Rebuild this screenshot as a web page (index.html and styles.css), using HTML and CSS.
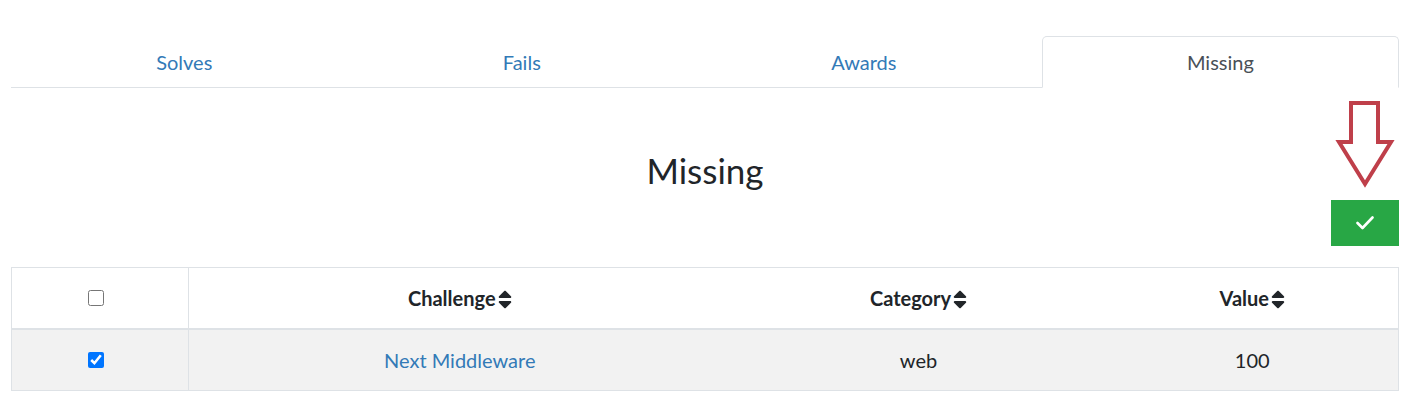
FILE: index.html
```html
<!DOCTYPE html>
<html>
<head>
<meta charset="utf-8">
<link rel="stylesheet" href="styles.css">
</head>
<body>
<div class="page">
  <nav class="tabs">
    <a class="tab" href="#">Solves</a>
    <a class="tab" href="#">Fails</a>
    <a class="tab" href="#">Awards</a>
    <a class="tab active" href="#">Missing</a>
  </nav>

  <h3 class="title">Missing</h3>

  <div class="actions">
    <svg class="arrow" width="60" height="88" viewBox="0 0 60 88">
      <polygon points="16,3 43,3 43,42 56,42 30,84 4,42 16,42" fill="#fff" stroke="#bf3f4a" stroke-width="4" stroke-linejoin="miter"/>
    </svg>
    <button class="btn-ok" type="button">
      <svg width="18" height="14" viewBox="0 0 18 14"><polyline points="1.5,7 6.5,12 16.5,1.5" fill="none" stroke="#fff" stroke-width="2.6" stroke-linecap="round" stroke-linejoin="round"/></svg>
    </button>
  </div>

  <table class="grid">
    <thead>
      <tr>
        <th class="sel"><input type="checkbox"></th>
        <th class="c2">Challenge<svg class="sort" viewBox="0 0 320 512"><path d="M41 288h238c21.4 0 32.1 25.9 17 41L177 448c-9.4 9.4-24.6 9.4-33.900 0L24 329c-15.1-15.1-4.400-41 17-41zm255-105L177 64c-9.400-9.400-24.600-9.400-33.900 0L24 183c-15.1 15.1-4.400 41 17 41h238c21.400 0 32.1-25.900 17-41z"/></svg></th>
        <th class="c3">Category<svg class="sort" viewBox="0 0 320 512"><path d="M41 288h238c21.4 0 32.1 25.9 17 41L177 448c-9.4 9.4-24.6 9.4-33.900 0L24 329c-15.1-15.1-4.400-41 17-41zm255-105L177 64c-9.400-9.400-24.600-9.400-33.900 0L24 183c-15.1 15.1-4.400 41 17 41h238c21.400 0 32.1-25.900 17-41z"/></svg></th>
        <th class="c4">Value<svg class="sort" viewBox="0 0 320 512"><path d="M41 288h238c21.4 0 32.1 25.9 17 41L177 448c-9.4 9.4-24.6 9.4-33.900 0L24 329c-15.1-15.1-4.400-41 17-41zm255-105L177 64c-9.400-9.400-24.600-9.400-33.900 0L24 183c-15.1 15.1-4.400 41 17 41h238c21.400 0 32.1-25.900 17-41z"/></svg></th>
      </tr>
    </thead>
    <tbody>
      <tr>
        <td class="sel"><input type="checkbox" checked></td>
        <td><a href="#">Next Middleware</a></td>
        <td>web</td>
        <td>100</td>
      </tr>
    </tbody>
  </table>
</div>
</body>
</html>
```

FILE: styles.css
```css
* { box-sizing: border-box; }

body {
  margin: 0;
  background: #fff;
  font-family: Lato, "Noto Sans", sans-serif;
  font-size: 20px;
  line-height: 30px;
  color: #212529;
}

.page {
  width: 1388px;
  margin-left: 11px;
  padding-top: 36px;
}

.tabs {
  display: flex;
  border-bottom: 1px solid #dee2e6;
}

.tab {
  flex: 1 1 auto;
  text-align: center;
  padding: 10px 20px;
  border: 1px solid transparent;
  border-top-left-radius: 5px;
  border-top-right-radius: 5px;
  margin-bottom: -1px;
  color: #337ab7;
  text-decoration: none;
}

.tab.active {
  color: #495057;
  background: #fff;
  border-color: #dee2e6 #dee2e6 #fff;
}

.title {
  margin: 61px 0 0;
  text-align: center;
  font-weight: 400;
  font-size: 35px;
  line-height: 42px;
}

.actions {
  position: relative;
  display: flex;
  justify-content: flex-end;
  margin-top: 9px;
}

.arrow {
  position: absolute;
  right: 4px;
  top: -100px;
}

.btn-ok {
  width: 68px;
  height: 46px;
  border: 0;
  border-radius: 0;
  background: #28a745;
  display: flex;
  align-items: center;
  justify-content: center;
  padding: 0;
}

.grid {
  width: 100%;
  margin-top: 21px;
  border-collapse: collapse;
  border: 1px solid #dee2e6;
}

.grid th, .grid td {
  padding: 15px;
  text-align: center;
  vertical-align: middle;
  line-height: 30px;
}

.grid th {
  font-weight: 700;
  border-bottom: 2px solid #dee2e6;
}

.grid tbody tr { background: #f2f2f2; }

.grid .sel {
  width: 177px;
  border-right: 1px solid #dee2e6;
}

.grid .c2 { width: 542px; }
.grid .c3 { width: 376px; }

.grid a { color: #337ab7; text-decoration: none; }

.grid input[type=checkbox] {
  width: 16px;
  height: 16px;
  margin: 0 9px 0 0;
  vertical-align: 0;
}

.sort {
  width: 14px;
  height: 23px;
  margin-left: 2px;
  vertical-align: -5px;
  fill: #212529;
}
```
